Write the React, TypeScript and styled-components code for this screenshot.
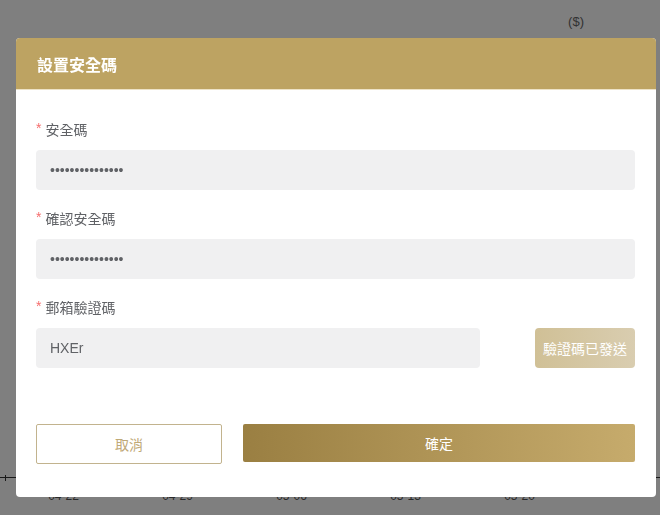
import React from "react";
import styled, { createGlobalStyle } from "styled-components";

const GlobalStyle = createGlobalStyle`
  * {
    box-sizing: border-box;
  }
  body {
    margin: 0;
    font-family: "Liberation Sans", "Noto Sans CJK TC", sans-serif;
    background: #fff;
  }
`;

const dates = ["04-22", "04-29", "05-06", "05-13", "05-20"];

type FieldProps = {
  label: string;
  children: React.ReactNode;
};

const Field = ({ label, children }: FieldProps) => (
  <FormItem>
    <Label>
      <Star>*</Star>
      {label}
    </Label>
    {children}
  </FormItem>
);

export default function App() {
  return (
    <>
      <GlobalStyle />
      <Page>
        <UnitRow>
          <Unit>($)</Unit>
        </UnitRow>
        <ChartArea />
        <Axis>
          <AxisTick />
        </Axis>
        <DateRow>
          {dates.map((d) => (
            <DateLabel key={d}>{d}</DateLabel>
          ))}
        </DateRow>
      </Page>

      <Overlay>
        <Dialog>
          <Header>
            <Title>設置安全碼</Title>
          </Header>
          <Body>
            <Field label="安全碼">
              <Input type="password" defaultValue="123456789012345" readOnly />
            </Field>
            <Field label="確認安全碼">
              <Input type="password" defaultValue="123456789012345" readOnly />
            </Field>
            <Field label="郵箱驗證碼">
              <CodeRow>
                <Input $width={444} defaultValue="HXEr" readOnly />
                <SendButton disabled>驗證碼已發送</SendButton>
              </CodeRow>
            </Field>
            <Footer>
              <CancelButton>取消</CancelButton>
              <ConfirmButton>確定</ConfirmButton>
            </Footer>
          </Body>
        </Dialog>
      </Overlay>
    </>
  );
}

const Page = styled.div`
  width: 660px;
  height: 515px;
  display: flex;
  flex-direction: column;
  background: #fff;
  overflow: hidden;
`;

const UnitRow = styled.div`
  display: flex;
  justify-content: flex-end;
  padding: 14px 76px 0 0;
`;

const Unit = styled.span`
  font-size: 13px;
  font-weight: normal;
  color: #666;
`;

const ChartArea = styled.div`
  flex: 1;
`;

const Axis = styled.div`
  height: 1px;
  background: #333;
  margin-bottom: 11px;
  position: relative;
`;

const AxisTick = styled.span`
  position: absolute;
  left: 5px;
  top: -2px;
  width: 1px;
  height: 6px;
  background: #333;
`;

const DateRow = styled.div`
  display: flex;
  gap: 79px;
  padding: 0 0 12px 46px;
`;

const DateLabel = styled.span`
  width: 35px;
  font-size: 12px;
  color: #555;
  text-align: center;
`;

const Overlay = styled.div`
  position: fixed;
  inset: 0;
  background: rgba(0, 0, 0, 0.5);
  padding: 38px 0 0 16px;
`;

const Dialog = styled.div`
  width: 640px;
  height: 459px;
  background: #fff;
  border-radius: 4px;
  overflow: hidden;
`;

const Header = styled.div`
  height: 52px;
  display: flex;
  align-items: center;
  padding: 0 21px;
  background: #bda362;
  border-bottom: 1px solid #ede2c6;
`;

const Title = styled.h3`
  margin: 0;
  font-size: 16px;
  font-weight: bold;
  color: #fff;
`;

const Body = styled.div`
  display: flex;
  flex-direction: column;
  padding: 30px 21px 0 20px;
`;

const FormItem = styled.div`
  display: flex;
  flex-direction: column;
  gap: 10px;
  margin-bottom: 19px;
`;

const Label = styled.label`
  display: flex;
  align-items: flex-start;
  height: 20px;
  line-height: 20px;
  font-size: 14px;
  color: #606266;
`;

const Star = styled.span`
  color: #f56c6c;
  font-size: 14px;
  line-height: 16px;
  margin-right: 4px;
`;

const Input = styled.input<{ $width?: number }>`
  width: ${(p) => (p.$width ? `${p.$width}px` : "100%")};
  height: 40px;
  border: none;
  outline: none;
  border-radius: 4px;
  background: #f0f0f1;
  padding: 0 14px;
  font-family: "Liberation Sans", "Noto Sans CJK TC", sans-serif;
  font-size: 14px;
  color: #606266;
`;

const CodeRow = styled.div`
  display: flex;
  justify-content: space-between;
`;

const SendButton = styled.button`
  width: 100px;
  height: 40px;
  border: none;
  border-radius: 4px;
  background: linear-gradient(90deg, #d0c096, #d9cdb0);
  color: #fff;
  font-family: "Liberation Sans", "Noto Sans CJK TC", sans-serif;
  font-size: 14px;
  padding: 0;
`;

const Footer = styled.div`
  display: flex;
  align-items: flex-start;
  gap: 21px;
  margin-top: 37px;
`;

const CancelButton = styled.button`
  width: 186px;
  height: 40px;
  border: 1px solid #c2b38e;
  border-radius: 2px;
  background: #fff;
  color: #bfa977;
  font-family: "Liberation Sans", "Noto Sans CJK TC", sans-serif;
  font-size: 14px;
`;

const ConfirmButton = styled.button`
  flex: 1;
  height: 38px;
  border: none;
  border-radius: 2px;
  background: linear-gradient(90deg, #9a7f42, #c6ab6c);
  color: #fff;
  font-family: "Liberation Sans", "Noto Sans CJK TC", sans-serif;
  font-size: 14px;
`;
